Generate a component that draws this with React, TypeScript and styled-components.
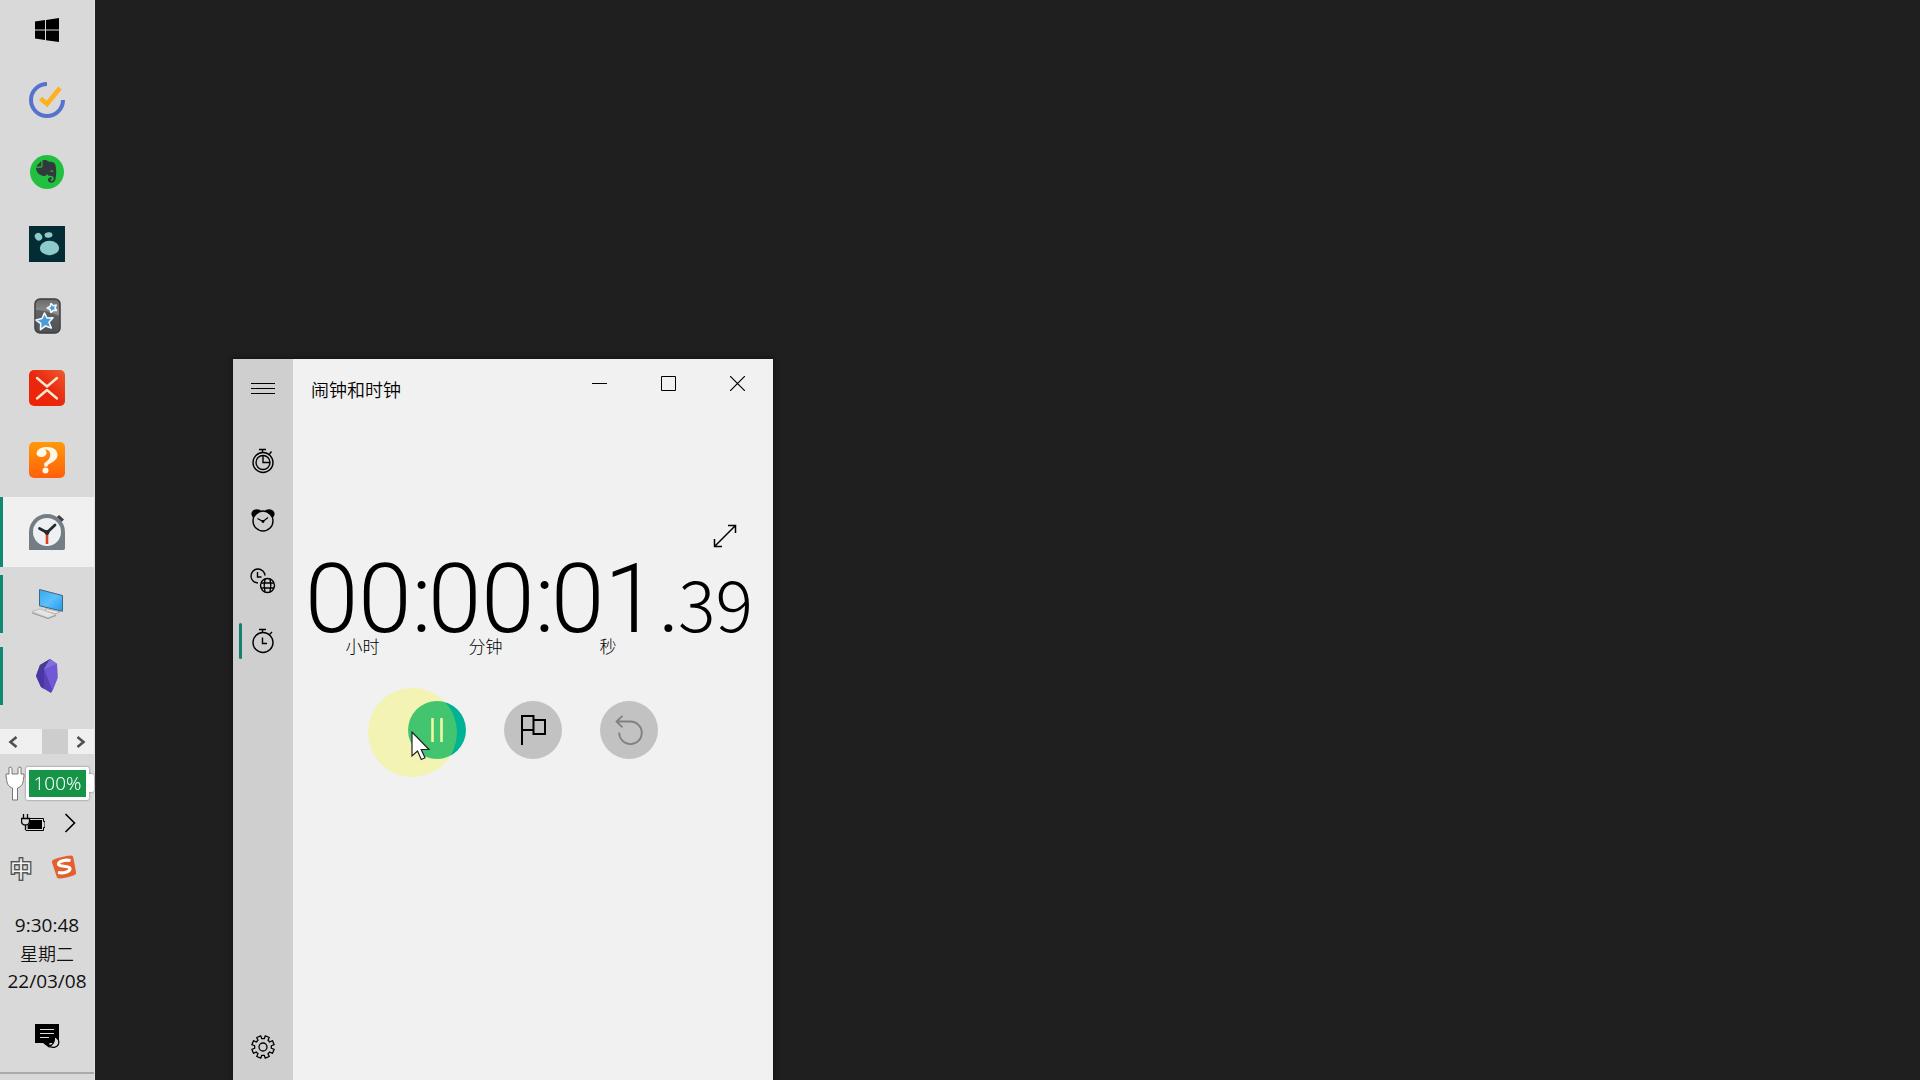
import React from "react";
import styled, { createGlobalStyle } from "styled-components";

const GlobalStyle = createGlobalStyle`
  *, *::before, *::after { box-sizing: border-box; }
  body {
    margin: 0;
    background: #1f1f1f;
    color: #000;
    font-family: "Open Sans", "Noto Sans CJK SC", sans-serif;
    overflow: hidden;
  }
  button {
    padding: 0;
    border: 0;
    background: none;
    color: inherit;
    font: inherit;
  }
  svg { display: block; flex: none; }
`;

const Desktop = styled.div`
  position: relative;
  display: flex;
  height: 100vh;
  background: #1f1f1f;
`;

/* ---------- taskbar ---------- */

const Taskbar = styled.aside`
  display: flex;
  flex-direction: column;
  width: 95px;
  background: #d9d9d9;
  border-right: 1px solid #e4e4e4;
`;

const StartButton = styled.button`
  display: grid;
  place-items: center;
  height: 58px;
  padding-top: 1px;
`;

const AppList = styled.nav`
  display: flex;
  flex-direction: column;
  gap: 2px;
  padding-top: 7px;
`;

const AppButton = styled.button<{ $active?: boolean; $running?: boolean }>`
  display: grid;
  grid-template-columns: 3px 1fr 4px;
  align-items: center;
  justify-items: center;
  height: 70px;
  background: ${(p) => (p.$active ? "#f0f0f0" : "transparent")};

  &::before {
    content: "";
    width: 3px;
    height: ${(p) => (p.$active ? "70px" : "58px")};
    background: ${(p) => (p.$active || p.$running ? "#0f8a70" : "transparent")};
  }
`;

const Scroller = styled.div`
  display: grid;
  grid-template-columns: 26px 1fr 26px 26px;
  height: 25px;
  margin-top: 18px;
  background: #f0f0f0;
`;

const ScrollArrow = styled.button`
  display: grid;
  place-items: center;
`;

const ScrollThumb = styled.span`
  grid-column: 3;
  background: #cdcdcd;
`;

const BatteryRow = styled.div`
  display: flex;
  align-items: center;
  justify-content: space-between;
  height: 34px;
  margin-top: 12px;
  padding-left: 5px;
`;

const BatteryBody = styled.div`
  display: flex;
  align-items: center;
  filter: drop-shadow(0 0 1px #777);

  &::after {
    content: "";
    width: 5px;
    height: 18px;
    background: #fff;
    border-radius: 0 2px 2px 0;
  }
`;

const BatteryLevel = styled.span`
  display: grid;
  place-items: center;
  width: 63px;
  height: 33px;
  border: 3px solid #fff;
  border-radius: 2px;
  background: #159448;
  color: #fff;
  font-family: "Noto Sans", sans-serif;
  font-size: 19px;
  font-weight: 300;
  line-height: 26px;
`;

const TrayRow = styled.div<{ $wide?: boolean }>`
  display: flex;
  align-items: center;
  gap: 19px;
  height: 42px;
  padding-left: ${(p) => (p.$wide ? "10px" : "21px")};
  margin-top: 2px;
`;

const TrayButton = styled.button`
  display: grid;
  place-items: center;
`;

const InputMode = styled.button`
  color: #f4f4f4;
  font: 400 22px/32px "Noto Sans CJK SC", sans-serif;
  -webkit-text-stroke: 3px #555;
  paint-order: stroke fill;
`;

const DateTime = styled.time`
  display: flex;
  flex-direction: column;
  align-items: center;
  margin-top: 23px;
  font-size: 19px;
  line-height: 28px;
  color: #111;
`;

const Weekday = styled.span`
  font-family: "Noto Sans CJK SC", sans-serif;
  font-size: 18px;
  font-weight: 350;
`;

const NoticeButton = styled.button`
  display: grid;
  place-items: center;
  height: 77px;
  padding-top: 6px;
`;

const ShowDesktop = styled.button`
  flex: 1;
  border-top: 2px solid #aaa;
`;

/* ---------- clock window ---------- */

const Window = styled.main`
  position: absolute;
  left: 233px;
  top: 359px;
  bottom: 0;
  width: 540px;
  display: grid;
  grid-template-columns: 60px 1fr;
  background: #f1f1f1;
  box-shadow: 0 0 4px 1px #141414;
`;

const SideNav = styled.nav`
  display: flex;
  flex-direction: column;
  padding-bottom: 3px;
  background: #cfcfcf;
`;

const NavButton = styled.button<{ $selected?: boolean; $last?: boolean }>`
  display: grid;
  grid-template-columns: 3px 1fr;
  align-items: center;
  justify-items: center;
  height: 60px;
  padding: 0 9px 0 6px;
  margin-top: ${(p) => (p.$last ? "auto" : "0")};

  &::before {
    content: "";
    width: 3px;
    height: 36px;
    border-radius: 2px;
    background: ${(p) => (p.$selected ? "#12806c" : "transparent")};
  }
`;

const NavGroup = styled.div`
  display: flex;
  flex-direction: column;
  padding-top: 12px;
`;

const Content = styled.section`
  display: flex;
  flex-direction: column;
`;

const TitleBar = styled.header`
  display: flex;
  justify-content: space-between;
  align-items: flex-start;
  height: 64px;
  padding-right: 1px;
`;

const Title = styled.h1`
  margin: 16px 0 0 18px;
  font: 350 18px/28px "Noto Sans CJK SC", sans-serif;
`;

const Caption = styled.div`
  display: flex;
`;

const CaptionButton = styled.button`
  display: grid;
  place-items: center;
  width: 69px;
  height: 48px;
`;

const ExpandRow = styled.div`
  display: flex;
  justify-content: flex-end;
  margin-top: 91px;
  padding-right: 36px;
`;

const ExpandButton = styled.button`
  display: grid;
  place-items: center;
  height: 44px;
`;

const Readout = styled.div`
  display: grid;
  grid-template-columns: 123px 123px 127px 1fr;
  align-items: baseline;
  margin-top: 6px;
  padding-left: 12px;
  font-family: Roboto, sans-serif;
  font-size: 96px;
  font-weight: 300;
  line-height: 70px;
`;

const Hundredths = styled.span`
  font-family: "Noto Sans CJK SC", sans-serif;
  font-size: 70px;
  font-weight: 300;
  line-height: 50px;
`;

const Units = styled.div`
  display: grid;
  grid-template-columns: 123px 123px 122px;
  padding-left: 8px;
  font: 300 17px/24px "Noto Sans CJK SC", sans-serif;
  text-align: center;
`;

const Actions = styled.div`
  display: flex;
  justify-content: center;
  gap: 38px;
  margin-top: 43px;
`;

const RoundButton = styled.button<{ $primary?: boolean }>`
  position: relative;
  display: grid;
  place-items: center;
  width: 58px;
  height: 58px;
  border-radius: 50%;
  background: ${(p) => (p.$primary ? "#00b294" : "#c2c2c2")};
`;

const PointerHalo = styled.span`
  position: absolute;
  left: -40px;
  top: -13px;
  width: 89px;
  height: 89px;
  border-radius: 50%;
  background: rgba(246, 246, 12, 0.27);
`;

const Pointer = styled.svg`
  position: absolute;
  left: 3px;
  top: 30px;
`;

/* ---------- icons ---------- */

const line = { fill: "none", stroke: "currentColor" } as const;

const WindowsLogo = () => (
  <svg width="24" height="24" viewBox="0 0 24 24">
    <path d="M0 3.4 10 2v9.4H0zM11 1.9 24 0v11.4H11zM0 12.4h10V22L0 20.6zM11 12.4h13V24l-13-1.8z" />
  </svg>
);

const TickIcon = () => (
  <svg width="36" height="36" viewBox="0 0 36 36" fill="none">
    <path d="M18 2A16 16 0 1 0 34 18" stroke="#5672cd" strokeWidth="4" />
    <path d="M11.5 16.5 18 22 31 6" stroke="#ffb01f" strokeWidth="4.6" />
  </svg>
);

const ElephantIcon = () => (
  <svg width="36" height="36" viewBox="0 0 36 36">
    <circle cx="18" cy="18" r="17" fill="#22c040" />
    <path
      d="M7 12.5 12.3 7v4.2c0 1-.4 1.400-1.300 1.400zM13.500 6.500c2-.8 4.500-.5 5.500 1 3 .3 6 .4 7 2.300 1.600 4 1.700 11 .3 16.200-.8 3-5.300 3.500-6.800 1.600-1.600-2.200.3-5 3.300-4.300v2c-1.500 0-1.500 1.700 0 1.700 1.800 0 2-2 1.700-3.500-.5-1.800-2.700-1.500-4.500-1.800-1-.2-1.500-1-1.900-2-.5 1.600-1.600 2.500-3.600 2.200-4.300-.6-7.200-3.400-7.500-8.100h4.600c1.400 0 1.900-.7 1.900-2z"
      fill="#33383a"
    />
    <path d="M21 17.500c.8-1.700 3-1.700 3.500.6-1-.6-2.300-.7-3.500-.6z" fill="#22c040" />
  </svg>
);

const PawIcon = () => (
  <svg width="36" height="36" viewBox="0 0 36 36">
    <path d="M0 0h36v36H0z" fill="#032c35" />
    <g fill="#8ccbca">
      <ellipse cx="20.500" cy="22" rx="9.700" ry="7.200" />
      <ellipse cx="9.500" cy="10.800" rx="3.500" ry="4" transform="rotate(-35 9.500 10.800)" />
      <ellipse cx="19.500" cy="9" rx="4" ry="2.700" transform="rotate(-8 19.500 9)" />
    </g>
  </svg>
);

const StarsIcon = () => (
  <svg width="36" height="36" viewBox="0 0 36 36">
    <defs>
      <linearGradient id="card" x1="0" y1="0" x2="0" y2="1">
        <stop offset="0" stopColor="#6a6a6a" />
        <stop offset=".4" stopColor="#8d8d8d" />
        <stop offset="1" stopColor="#555" />
      </linearGradient>
    </defs>
    <rect x="6" y="1" width="25" height="34" rx="5" fill="url(#card)" stroke="#3a3d42" strokeWidth="1.500" />
    <path d="M7 12c8 0 15 2 23 6v11c0 3-2 5-4 5H11c-2 0-4-2-4-5z" fill="#4b4e53" opacity=".7" />
    <g fill="#4b9bd6" stroke="#f2f9ff" strokeWidth="1.600" strokeLinejoin="round">
      <path d="m15.500 15 2.500 5 6-.2-4 4.500 2.300 5.700-5.800-2-5 3.700.2-6.200-4.700-3.500 6-1.500z" />
      <path d="m22 5.500 2.200 2.200 3-.7-1.200 3 1.500 2.500-3.200-.2-2.300 2.200-.8-3-3-1.500 3-1.500z" />
    </g>
  </svg>
);

const XmindIcon = () => (
  <svg width="36" height="36" viewBox="0 0 36 36" fill="none">
    <defs>
      <linearGradient id="red" x1="1" y1="0" x2="0" y2="1">
        <stop offset="0" stopColor="#ef5a2c" />
        <stop offset=".5" stopColor="#e8280f" />
        <stop offset="1" stopColor="#f02204" />
      </linearGradient>
    </defs>
    <rect width="36" height="36" rx="5" fill="url(#red)" />
    <path d="m8 8 10 8.500L28 8M8 28.500 18 20l10 8.500" stroke="#ffe9cf" strokeWidth="2.400" strokeLinecap="round" strokeLinejoin="round" />
  </svg>
);

const HelpIcon = () => (
  <svg width="36" height="36" viewBox="0 0 36 36">
    <defs>
      <linearGradient id="orange" x1="0" y1="0" x2="0" y2="1">
        <stop offset="0" stopColor="#ff9a0a" />
        <stop offset="1" stopColor="#ff5f0a" />
      </linearGradient>
    </defs>
    <rect width="36" height="36" rx="5" fill="url(#orange)" />
    <path
      d="M7.500 12C7.500 7.500 12 5 18 5c6.500 0 10.500 3.200 10.500 7.800 0 5.700-6 7.700-9.800 10.200v1.500h-3.500v-3.200c3.300-2.300 6-4.500 6-8.500 0-3.800-2.200-5.600-5.200-5.300 1.700 1.500 2 3.500 1 5.200-2.100 3.200-8.500 3.200-9.500-.7z"
      fill="#fff9ea"
    />
    <circle cx="16.500" cy="28.500" r="3" fill="#fff9ea" />
  </svg>
);

const ClockAppIcon = () => (
  <svg width="36" height="36" viewBox="0 0 36 36">
    <path d="m27 4 3-3 5 4.500-3 3z" fill="#3b4045" />
    <path d="M0 36V18C0 8 8 0 18 0s18 8 18 18v16c0 1.300-.7 2-2 2z" fill="#757d84" />
    <circle cx="18" cy="18" r="14" fill="#eef1f3" />
    <path d="M18 19v11" stroke="#d8411f" strokeWidth="2.600" />
    <path d="m10.500 14.500 7.500 4 8-7.500" stroke="#24282b" strokeWidth="2.800" fill="none" strokeLinecap="round" />
    <circle cx="18" cy="18.500" r="2.400" fill="#24282b" />
  </svg>
);

const ComputerIcon = () => (
  <svg width="36" height="36" viewBox="0 0 36 36">
    <defs>
      <linearGradient id="screen" x1="0" y1="0" x2="1" y2="1">
        <stop offset="0" stopColor="#35a8ee" />
        <stop offset=".5" stopColor="#5cc0fb" />
        <stop offset="1" stopColor="#1f98ea" />
      </linearGradient>
    </defs>
    <path d="m10.500 3.500 23 6v15.800l-23-5.500z" fill="url(#screen)" stroke="#41657e" />
    <path d="m17 22.500 9 2.200 5 .8-4 2.500-11-3z" fill="#e9e9e9" stroke="#888" strokeWidth=".6" />
    <path d="m3 25.500 8-2.500 16 5.500-8 3.500z" fill="#e4e4e4" stroke="#aaa" strokeWidth=".6" />
    <path d="m3 27 16 5.500 8-3" fill="none" stroke="#888" strokeWidth=".8" />
  </svg>
);

const CrystalIcon = () => (
  <svg width="36" height="36" viewBox="0 0 36 36">
    <path d="M21 1 11 7 7 18l5 11 10 6 1.500-2.500L28.500 20 28 6z" fill="#5a41b8" />
    <path d="m21 1-6 10-8 7 4-11z" fill="#4a3a96" />
    <path d="m21 1 7 5 .5 14-5 12.500L15 11z" fill="#7257d6" />
    <path d="M15 11 7 18l5 11 3 2z" fill="#4c36a6" />
    <path d="m21 1 7 5-13 5z" fill="#8270da" />
  </svg>
);

const BoldChevron = ({ flip }: { flip?: boolean }) => (
  <svg width="10" height="12" viewBox="0 0 10 12" {...line} strokeWidth="2.600">
    <path d={flip ? "m1.500 1 6 5-6 5" : "m8.500 1-6 5 6 5"} stroke="#505050" />
  </svg>
);

const PlugIcon = () => (
  <svg width="20" height="35" viewBox="0 0 20 35">
    <path
      d="M4 1.500c1.500-1 3 0 3 1.200V8h6V2.700c0-1.200 1.500-2.200 3-1.200V8h3v3.500h-.5c0 6-2 9.500-6 10.500v12h-5V22c-4-1-6-4.500-6-10.500H1V8h3z"
      fill="#fff"
      stroke="#777"
    />
  </svg>
);

const ChargingIcon = () => (
  <svg width="24" height="18" viewBox="0 0 24 18">
    <path d="M5 4.500h17.500v3H24v6h-1.500v3H5z" {...line} />
    <path d="M6.500 6H21v9H6.500z" />
    <path d="M0 3h9v4c0 2.500-1 4-2.800 4.600V16H0z" fill="#d9d9d9" />
    <path d="M2.500 0v4M6.500 0v4M.5 4.500h8V7c0 2.500-1.500 4-4 4s-4-1.500-4-4zM4.500 11v5" {...line} strokeWidth="1.300" />
  </svg>
);

const TrayChevron = () => (
  <svg width="12" height="20" viewBox="0 0 12 20" {...line} strokeWidth="1.600">
    <path d="m1.500 1 9 9-9 9" />
  </svg>
);

const SogouIcon = () => (
  <svg width="26" height="26" viewBox="0 0 26 26" fill="none">
    <path d="M3 5.500C8 3.500 14 2 20 1.500c1.500 0 2 .7 2.300 2L25 18c.2 1.800-.5 2.800-2 3.300-5 2-10 3-15 3.200-1.500 0-2.200-1-2.500-2.500L1 8.500c-.3-1.700.5-2.500 2-3z" fill="#e2602f" />
    <path d="M19.500 6.500C15 5.500 7.500 7 7.500 10c0 3.500 11 1 11.500 4.500.3 3.500-7 5-12 4" stroke="#fff" strokeWidth="3.200" />
  </svg>
);

const NoticeIcon = () => (
  <svg width="25" height="26" viewBox="0 0 25 26">
    <path d="M0 0h24v19H14.500v5L8 19H0z" />
    <path d="M5 5.500h14M5 9.500h14M5 13.500h9" stroke="#ddd" strokeWidth="1.200" />
    <path d="M19 12.500c3.500 1.500 5.500 4.500 4.500 7.500-1.500 4-7 4.500-10 1.500 4 .5 7-4 5.500-9z" fill="#d9d9d9" stroke="#000" strokeWidth="1.200" />
  </svg>
);

const MenuIcon = () => (
  <svg width="24" height="12" viewBox="0 0 24 12" {...line} strokeWidth="1">
    <path d="M0 .5h24M0 5.500h24M0 10.500h24" />
  </svg>
);

const TimerIcon = () => (
  <svg width="24" height="26" viewBox="0 0 24 26" {...line} strokeWidth="1.400">
    <circle cx="12" cy="14.500" r="10" />
    <circle cx="12" cy="14.500" r="7" />
    <path d="M12 7.500v7h7M8 1.500h7M11.500 1.500v3M18.500 6l2-2.500" />
  </svg>
);

const AlarmIcon = () => (
  <svg width="24" height="26" viewBox="0 0 24 26" {...line} strokeWidth="1.400">
    <circle cx="12" cy="13" r="10" />
    <path d="M2 8.500C-.5 4.500 3 .5 8.500 2.500zM22 8.500c2.500-4-1-8-6.500-6z" fill="currentColor" />
    <path d="m6.500 10.500 5.500 3 5-4" strokeWidth="1.200" />
    <circle cx="12" cy="13.500" r=".7" fill="currentColor" />
  </svg>
);

const WorldIcon = () => (
  <svg width="26" height="26" viewBox="0 0 26 26" {...line} strokeWidth="1.400">
    <path d="M8 15A7 7 0 1 1 15 7.500M7.500 4v5h4" />
    <g strokeWidth="1.400">
      <circle cx="17.500" cy="17.500" r="7" />
      <path d="M15 11c-1 4-1 9 0 13M20 11c1 4 1 9 0 13M11 15h13M11 20h13" />
    </g>
  </svg>
);

const StopwatchIcon = () => (
  <svg width="24" height="26" viewBox="0 0 24 26" {...line} strokeWidth="1.400">
    <circle cx="12" cy="14.500" r="10" />
    <path d="M11.500 9.500v6H16M8 1.500h7M11.500 1.500v3M18.500 6.500 21 4" />
  </svg>
);

const gearOutline = Array.from({ length: 8 }, (_, i) => {
  const middle = 22.5 + i * 45;
  return [[-14, 8.4], [-11, 11.4], [11, 11.4], [14, 8.4]]
    .map(([offset, radius]) => {
      const a = ((middle + offset) * Math.PI) / 180;
      return `${(12 + radius * Math.sin(a)).toFixed(2)},${(12 - radius * Math.cos(a)).toFixed(2)}`;
    })
    .join(" ");
}).join(" ");

const GearIcon = () => (
  <svg width="24" height="24" viewBox="0 0 24 24" {...line} strokeWidth="1.300" strokeLinejoin="round">
    <circle cx="12" cy="12" r="4" />
    <polygon points={gearOutline} />
  </svg>
);

const MinimizeIcon = () => (
  <svg width="15" height="15" viewBox="0 0 15 15" {...line}><path d="M0 7.500h15" /></svg>
);
const MaximizeIcon = () => (
  <svg width="15" height="15" viewBox="0 0 15 15" {...line}><path d="M.5.5h14v14H.5z" /></svg>
);
const CloseIcon = () => (
  <svg width="15" height="15" viewBox="0 0 15 15" {...line} strokeWidth="1.200"><path d="m0 0 15 15M15 0 0 15" /></svg>
);
const ExpandIcon = () => (
  <svg width="24" height="24" viewBox="0 0 24 24" {...line} strokeWidth="1.500">
    <path d="M1.500 22.500 22.500 1.500M15 1.500h7.500V9M1.500 15v7.500H9" />
  </svg>
);

const PauseIcon = () => (
  <svg width="12" height="24" viewBox="0 0 12 24" stroke="#e8fadf" strokeWidth="2.600">
    <path d="M1.500 0v24M10.500 0v24" />
  </svg>
);

const FlagIcon = () => (
  <svg width="26" height="30" viewBox="0 0 26 30" {...line} strokeWidth="2">
    <path d="M2 30V1h11.500v14H2M13.500 5H25v14H13.500v-4" />
  </svg>
);

const ResetIcon = () => (
  <svg width="28" height="30" viewBox="0 0 28 30" stroke="#808080" fill="none" strokeWidth="1.800">
    <path d="M1.500 6.500h14A11.300 11.300 0 1 1 4.200 17.500M7.500.8 1.500 6.500l6 5.800" />
  </svg>
);

const apps = [
  { name: "滴答清单", Icon: TickIcon },
  { name: "印象笔记", Icon: ElephantIcon },
  { name: "Logseq", Icon: PawIcon },
  { name: "Anki", Icon: StarsIcon },
  { name: "XMind", Icon: XmindIcon },
  { name: "帮助", Icon: HelpIcon },
  { name: "闹钟和时钟", Icon: ClockAppIcon, active: true },
  { name: "此电脑", Icon: ComputerIcon, running: true },
  { name: "Obsidian", Icon: CrystalIcon, running: true },
];

const sections = [
  { name: "计时器", Icon: TimerIcon },
  { name: "闹钟", Icon: AlarmIcon },
  { name: "世界时钟", Icon: WorldIcon },
  { name: "秒表", Icon: StopwatchIcon, selected: true },
];

export default function App() {
  return (
    <Desktop>
      <GlobalStyle />
      <Taskbar>
        <StartButton aria-label="开始"><WindowsLogo /></StartButton>
        <AppList>
          {apps.map(({ name, Icon, active, running }) => (
            <AppButton key={name} aria-label={name} $active={active} $running={running}>
              <Icon />
            </AppButton>
          ))}
        </AppList>
        <Scroller>
          <ScrollArrow aria-label="向左"><BoldChevron /></ScrollArrow>
          <ScrollThumb />
          <ScrollArrow aria-label="向右"><BoldChevron flip /></ScrollArrow>
        </Scroller>
        <BatteryRow>
          <PlugIcon />
          <BatteryBody><BatteryLevel>100%</BatteryLevel></BatteryBody>
        </BatteryRow>
        <TrayRow>
          <TrayButton aria-label="电源"><ChargingIcon /></TrayButton>
          <TrayButton aria-label="显示隐藏的图标"><TrayChevron /></TrayButton>
        </TrayRow>
        <TrayRow $wide>
          <InputMode>中</InputMode>
          <TrayButton aria-label="搜狗输入法"><SogouIcon /></TrayButton>
        </TrayRow>
        <DateTime dateTime="2022-03-08T09:30:48">
          <span>9:30:48</span>
          <Weekday>星期二</Weekday>
          <span>22/03/08</span>
        </DateTime>
        <NoticeButton aria-label="通知"><NoticeIcon /></NoticeButton>
        <ShowDesktop aria-label="显示桌面" />
      </Taskbar>

      <Window>
        <SideNav>
          <NavButton aria-label="菜单"><MenuIcon /></NavButton>
          <NavGroup>
            {sections.map(({ name, Icon, selected }) => (
              <NavButton key={name} aria-label={name} $selected={selected}><Icon /></NavButton>
            ))}
          </NavGroup>
          <NavButton $last aria-label="设置"><GearIcon /></NavButton>
        </SideNav>
        <Content>
          <TitleBar>
            <Title>闹钟和时钟</Title>
            <Caption>
              <CaptionButton aria-label="最小化"><MinimizeIcon /></CaptionButton>
              <CaptionButton aria-label="最大化"><MaximizeIcon /></CaptionButton>
              <CaptionButton aria-label="关闭"><CloseIcon /></CaptionButton>
            </Caption>
          </TitleBar>
          <ExpandRow>
            <ExpandButton aria-label="展开"><ExpandIcon /></ExpandButton>
          </ExpandRow>
          <Readout>
            <span>00:</span>
            <span>00:</span>
            <span>01.</span>
            <Hundredths>39</Hundredths>
          </Readout>
          <Units>
            <span>小时</span>
            <span>分钟</span>
            <span>秒</span>
          </Units>
          <Actions>
            <RoundButton $primary aria-label="暂停">
              <PauseIcon />
              <PointerHalo />
              <Pointer width="20" height="30" viewBox="0 0 20 30">
                <path d="M1 1v24l5.500-5 3.800 8.500 3.700-1.700-3.800-8.300H18z" fill="#fff" stroke="#222" strokeWidth="1.200" />
              </Pointer>
            </RoundButton>
            <RoundButton aria-label="计次"><FlagIcon /></RoundButton>
            <RoundButton aria-label="重置"><ResetIcon /></RoundButton>
          </Actions>
        </Content>
      </Window>
    </Desktop>
  );
}
